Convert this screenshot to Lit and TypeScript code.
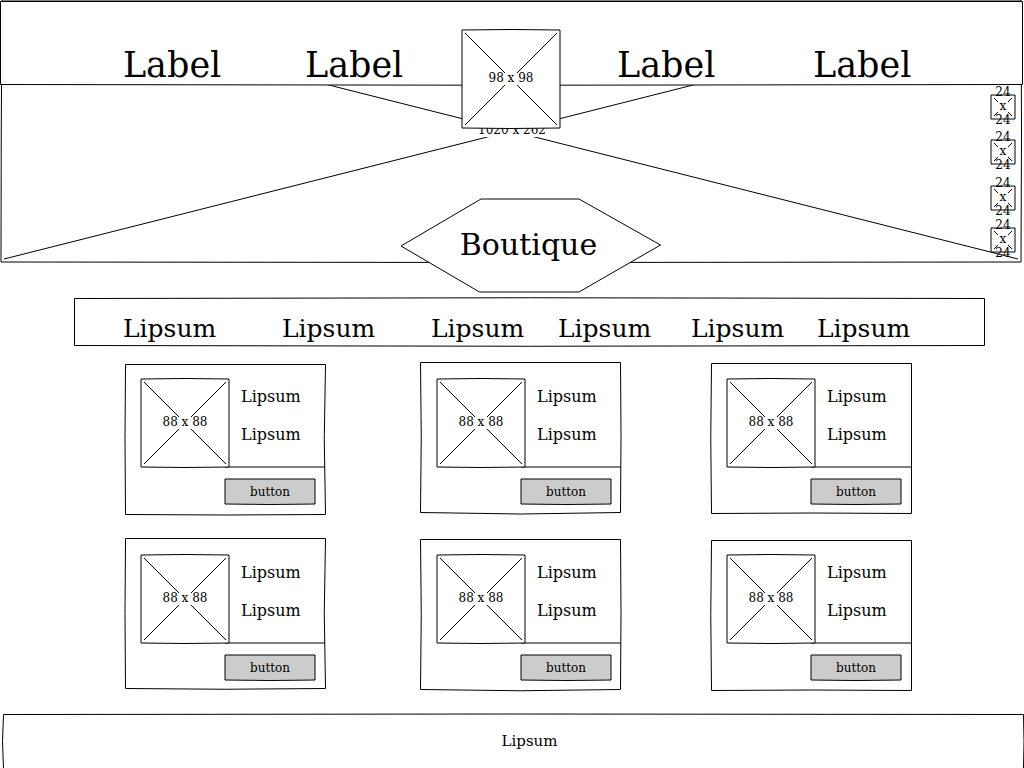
import { LitElement, html, css, svg } from "lit";
import { customElement, property } from "lit/decorators.js";

const inkStyles = css`
  .ink {
    position: absolute;
    inset: 0;
    z-index: -1;
    width: 100%;
    height: 100%;
    overflow: visible;
    pointer-events: none;
  }
  .ink path {
    fill: #fff;
    stroke: #000;
    stroke-width: 1;
    vector-effect: non-scaling-stroke;
  }
  .ink .line {
    fill: none;
  }
  .ink .grey {
    fill: #ccc;
  }
`;

const ink = (w: number, h: number, shape: string, lines = "", tone = "") => html`
  <svg class="ink" viewBox="0 0 ${w} ${h}" preserveAspectRatio="none" aria-hidden="true">
    ${svg`<path class=${tone} d=${shape}></path>`}
    ${lines ? svg`<path class="line" d=${lines}></path>` : ""}
  </svg>
`;

/* Square image placeholder with crossed diagonals and its size as caption. */
@customElement("image-slot")
export class ImageSlot extends LitElement {
  @property({ type: Number }) size = 88;

  static styles = [
    inkStyles,
    css`
      :host {
        display: block;
        flex: none;
      }
      .slot {
        position: relative;
        isolation: isolate;
        display: flex;
        align-items: center;
        justify-content: center;
        box-sizing: border-box;
        font-size: 12px;
        text-align: center;
      }
      .caption {
        padding-bottom: 2px;
        background: #fff;
        line-height: 10px;
        white-space: nowrap;
      }
      .small .caption {
        background: none;
        white-space: normal;
        line-height: 14px;
        width: min-content;
      }
    `,
  ];

  render() {
    const s = this.size;
    const e = s - 3;
    const m = s / 2;
    const small = s < 40;
    const bow = small ? 0 : 1;
    const frame = `M0 0Q${m} ${-bow} ${s} 0V${s}Q${m} ${s + bow} 0 ${s}Z`;
    const cross = small
      ? `M3 3l4 4M${e} 3l-4 4M3 ${e}l4 -4M${e} ${e}l-4 -4`
      : `M3 3L${e} ${e}M${e} 3L3 ${e}`;
    return html`
      <div class="slot ${small ? "small" : ""}" style="width:${s}px;height:${s}px">
        ${ink(s, s, frame, cross)}
        <span class="caption">${s} x ${s}</span>
      </div>
    `;
  }
}

@customElement("product-card")
export class ProductCard extends LitElement {
  @property() frame = "";

  static styles = [
    inkStyles,
    css`
      :host {
        display: block;
      }
      .card {
        position: relative;
        isolation: isolate;
        display: flex;
        flex-direction: column;
        gap: 12px;
        box-sizing: border-box;
        width: 200px;
        padding: 16px 10px 10px 16px;
      }
      .top {
        display: flex;
        gap: 12px;
      }
      .details {
        display: flex;
        flex-direction: column;
        gap: 18px;
        padding-top: 8px;
      }
      p {
        margin: 0;
        font-size: 16px;
        line-height: 20px;
      }
      button {
        position: relative;
        isolation: isolate;
        align-self: flex-end;
        box-sizing: border-box;
        width: 90px;
        height: 25px;
        padding: 2px 0 0;
        border: 0;
        background: none;
        color: inherit;
        font-family: inherit;
        font-size: 12px;
        line-height: 23px;
      }
    `,
  ];

  render() {
    return html`
      <article class="card">
        ${ink(200, 151, this.frame, "M100 104H200")}
        <div class="top">
          <image-slot size="88"></image-slot>
          <div class="details">
            <p>Lipsum</p>
            <p>Lipsum</p>
          </div>
        </div>
        <button type="button">${ink(90, 25, "M0 0H90V25Q45 26 0 25Z", "", "grey")}button</button>
      </article>
    `;
  }
}

@customElement("app-root")
export class AppRoot extends LitElement {
  private menu = ["Label", "Label", "Label", "Label"];
  private tabs = ["Lipsum", "Lipsum", "Lipsum", "Lipsum", "Lipsum", "Lipsum"];
  private frames = [
    "M.5 1.5H200.5Q198 76 200.5 151.5Q100 152.5 .5 151.5Q-.5 76 .5 1.5Z",
    "M-.5 -.5H199.5Q200.5 75 199.5 149.5Q100 152.5 -.5 149.5Q1 75 -.5 -.5Z",
    "M.5 .5H200.5V150.5Q100 149.5 .5 150.5Q-1 75 .5 .5Z",
    "M.5 -.5H200.5Q198 75 200.5 149.5Q100 151 .5 149.5Q-.5 75 .5 -.5Z",
    "M-.5 .5H199.5Q200.5 75 199.5 150.5Q100 153 -.5 150.5Q1 75 -.5 .5Z",
    "M.5 1.5H200.5V151.5Q100 150.5 .5 151.5Q-1 76 .5 1.5Z",
  ];

  static styles = [
    inkStyles,
    css`
      :host {
        display: block;
        overflow: hidden;
        background: #fff;
        color: #000;
        font-family: "DejaVu Serif", serif;
      }
      a {
        color: inherit;
        text-decoration: none;
      }
      .hero {
        position: relative;
        isolation: isolate;
        display: flex;
        flex-direction: column;
        height: 262px;
      }
      .header {
        position: relative;
        isolation: isolate;
        display: grid;
        grid-template-columns: 182fr 312fr 196fr 211fr;
        padding: 45px 0 0 12%;
        font-size: 35px;
        line-height: 40px;
      }
      .hero-caption {
        position: absolute;
        top: 125px;
        left: 0;
        right: 0;
        margin: 0 auto;
        padding-bottom: 2px;
        width: max-content;
        background: #fff;
        font-size: 12px;
        line-height: 10px;
      }
      .logo {
        position: absolute;
        top: 30px;
        left: calc(50% - 50px);
      }
      .social {
        display: grid;
        grid-template-rows: 45px 46px 42px 24px;
        align-self: flex-end;
        padding: 10px 9px 0 0;
      }
      .title {
        position: absolute;
        top: 199px;
        left: calc(50% - 111px);
        isolation: isolate;
        box-sizing: border-box;
        width: 260px;
        height: 94px;
        margin: 0;
        padding-right: 5px;
        font-size: 30px;
        font-weight: normal;
        line-height: 92px;
        text-align: center;
      }
      .tabs {
        position: relative;
        isolation: isolate;
        display: grid;
        grid-template-columns: 159fr 149fr 127fr 133fr 126fr 168fr;
        margin: 36px 39px 0 74px;
        padding: 16px 0 2px 49px;
        font-size: 25px;
        line-height: 30px;
      }
      .products {
        display: grid;
        grid-template-columns: 296fr 290fr 313fr;
        row-gap: 25px;
        padding: 17px 0 24px 125px;
      }
      .footer {
        position: relative;
        isolation: isolate;
        margin-left: 3px;
        padding: 17px 0 17px 32px;
        font-size: 15px;
        line-height: 20px;
        text-align: center;
      }
    `,
  ];

  render() {
    return html`
      <section class="hero">
        ${ink(
          1024,
          262,
          "M2 0H1021Q1022 131 1021 262Q512 263 1 262Q1 131 2 0Z",
          "M4 3L1018 259M1018 3L4 259",
        )}
        <span class="hero-caption">1020 x 262</span>
        <nav class="header" aria-label="Main">
          ${ink(1024, 85, "M.5 1.5H1022.5V84.5Q512 86 .5 84.5Z")}
          ${this.menu.map((t) => html`<a href="#">${t}</a>`)}
        </nav>
        <div class="social">
          ${[0, 1, 2, 3].map(() => html`<image-slot size="24"></image-slot>`)}
        </div>
        <image-slot class="logo" size="98"></image-slot>
        <h1 class="title">
          ${ink(260, 94, "M80 0H178L259.5 46L178 93H78.5L0 47Z")}Boutique
        </h1>
      </section>
      <nav class="tabs" aria-label="Categories">
        ${ink(911, 48, "M.5 .5Q455 -1 910.5 .5V47.5Q455 49 .5 47.5Z")}
        ${this.tabs.map((t) => html`<a href="#">${t}</a>`)}
      </nav>
      <main class="products">
        ${this.frames.map((f) => html`<product-card .frame=${f}></product-card>`)}
      </main>
      <footer class="footer">
        ${ink(1021, 54, "M.5 .5Q510 -.5 1020.5 .5Q1021.5 27 1020.5 54.5H.5Q-1.5 27 .5 .5Z")}
        Lipsum
      </footer>
    `;
  }
}
